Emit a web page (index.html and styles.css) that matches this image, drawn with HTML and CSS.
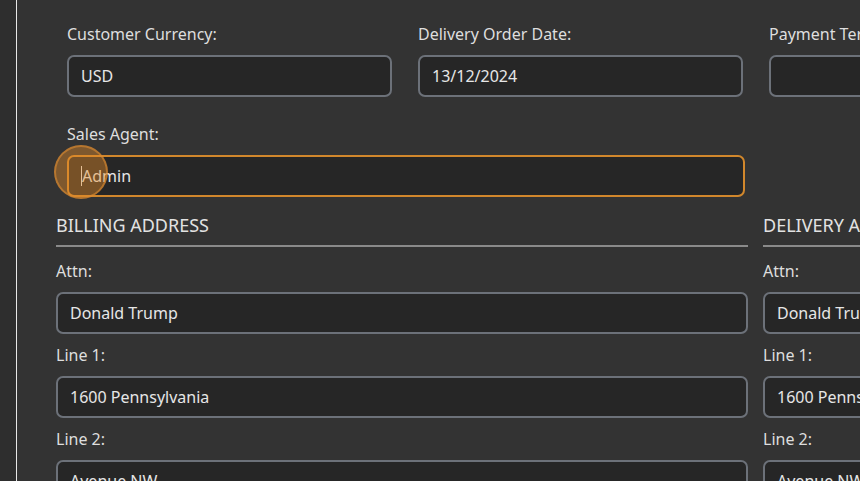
FILE: index.html
```html
<!DOCTYPE html>
<html>
<head>
<meta charset="utf-8">
<link rel="stylesheet" href="styles.css">
</head>
<body>
<div class="page">
  <div class="strip"></div>
  <main class="main">
    <section class="top-grid">
      <div class="field">
        <label class="label">Customer Currency:</label>
        <div class="input">USD</div>
      </div>
      <div class="field">
        <label class="label">Delivery Order Date:</label>
        <div class="input">13/12/2024</div>
      </div>
      <div class="field">
        <label class="label">Payment Terms:</label>
        <div class="input"></div>
      </div>
      <div class="field span2">
        <label class="label">Sales Agent:</label>
        <div class="input focused"><span class="caret"></span>Admin<span class="click-dot"></span></div>
      </div>
    </section>
    <section class="addresses">
      <div class="address">
        <h2 class="heading">BILLING ADDRESS</h2>
        <div class="field">
          <label class="label">Attn:</label>
          <div class="input">Donald Trump</div>
        </div>
        <div class="field">
          <label class="label">Line 1:</label>
          <div class="input">1600 Pennsylvania</div>
        </div>
        <div class="field">
          <label class="label">Line 2:</label>
          <div class="input">Avenue NW</div>
        </div>
      </div>
      <div class="address">
        <h2 class="heading">DELIVERY ADDRESS</h2>
        <div class="field">
          <label class="label">Attn:</label>
          <div class="input">Donald Trump</div>
        </div>
        <div class="field">
          <label class="label">Line 1:</label>
          <div class="input">1600 Pennsylvania</div>
        </div>
        <div class="field">
          <label class="label">Line 2:</label>
          <div class="input">Avenue NW</div>
        </div>
      </div>
    </section>
  </main>
</div>
</body>
</html>
```
FILE: styles.css
```css
* { box-sizing: border-box; }
html, body {
  margin: 0;
  height: 100%;
  overflow: hidden;
  background: #333333;
  font-family: "Noto Sans", "Open Sans", sans-serif;
  color: #e2e2e2;
}
.page {
  display: flex;
  height: 481px;
  width: 860px;
  overflow: hidden;
}
.strip {
  flex: 0 0 17px;
  background: #2e2e2e;
  border-right: 1px solid #e8e8e8;
}
.main {
  flex: 0 0 auto;
  padding: 23px 0 0 39px;
}
.top-grid {
  display: grid;
  grid-template-columns: 325px 325px 325px;
  column-gap: 26px;
  row-gap: 26px;
  margin-left: 11px;
}
.span2 { grid-column: span 2; }
.span2 .input { margin-right: -2px; }
.field {
  display: flex;
  flex-direction: column;
}
.label {
  font-size: 16px;
  line-height: 22px;
  color: #dedede;
  margin-bottom: 10px;
}
.input {
  position: relative;
  height: 42px;
  border: 2px solid #6c7179;
  border-radius: 7px;
  background: #262626;
  padding: 0 12px;
  font-size: 16px;
  line-height: 39px;
  color: #e6e6e6;
  white-space: nowrap;
}
.input.focused {
  border-color: #d1872c;
}
.caret {
  display: inline-block;
  width: 1px;
  height: 20px;
  background: #e6e6e6;
  vertical-align: -4px;
}
.click-dot {
  position: absolute;
  left: -15px;
  top: -12px;
  width: 54px;
  height: 54px;
  border-radius: 50%;
  background: rgba(232, 140, 40, 0.42);
  border: 2px solid rgba(220, 140, 50, 0.6);
}
.addresses {
  display: grid;
  grid-template-columns: 692px 692px;
  column-gap: 15px;
  margin-top: 16px;
}
.address {
  display: flex;
  flex-direction: column;
  gap: 10px;
}
.heading {
  margin: 0 0 3px 0;
  font-size: 18px;
  line-height: 24px;
  font-weight: normal;
  color: #e2e2e2;
  padding-bottom: 8px;
  border-bottom: 2px solid #8a8a8a;
}
```
